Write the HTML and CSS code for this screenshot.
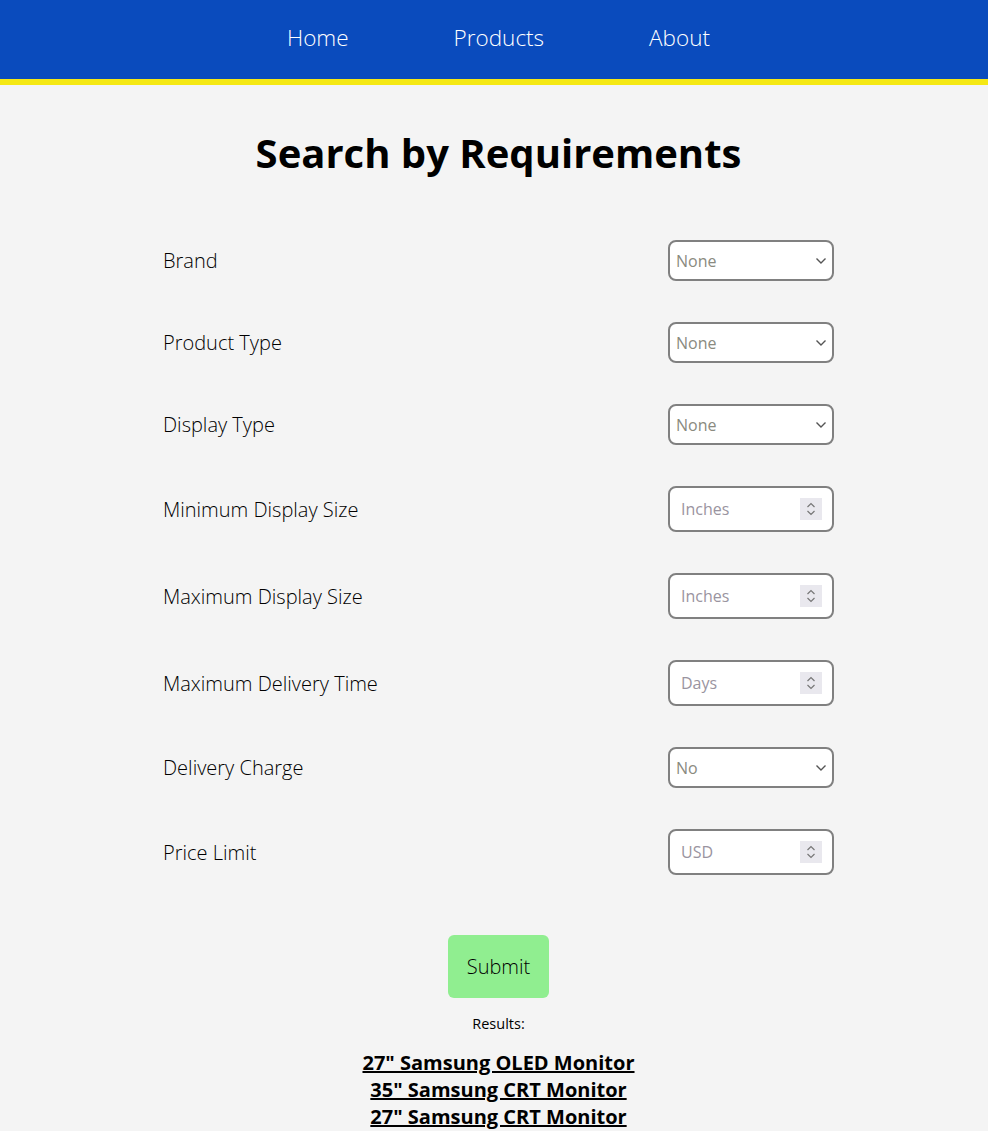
FILE: index.html
```html
<!DOCTYPE html>
<html lang="en">
<head>
<meta charset="utf-8">
<title>Search by Requirements</title>
<link rel="stylesheet" href="styles.css">
</head>
<body>
<nav class="nav">
  <a class="nav-link" href="#">Home</a>
  <a class="nav-link" href="#">Products</a>
  <a class="nav-link" href="#">About</a>
</nav>
<main class="main">
  <h1 class="title">Search by Requirements</h1>
  <form class="form">
    <div class="row">
      <label class="label" for="brand">Brand</label>
      <span class="control">
        <select class="field select" id="brand"><option>None</option></select>
        <svg class="chevron" width="12" height="8" viewBox="0 0 12 8"><path d="M1.5 1.5 L6 6 L10.5 1.5" fill="none" stroke="#555" stroke-width="1.4"/></svg>
      </span>
    </div>
    <div class="row">
      <label class="label" for="ptype">Product Type</label>
      <span class="control">
        <select class="field select" id="ptype"><option>None</option></select>
        <svg class="chevron" width="12" height="8" viewBox="0 0 12 8"><path d="M1.5 1.5 L6 6 L10.5 1.5" fill="none" stroke="#555" stroke-width="1.4"/></svg>
      </span>
    </div>
    <div class="row">
      <label class="label" for="dtype">Display Type</label>
      <span class="control">
        <select class="field select" id="dtype"><option>None</option></select>
        <svg class="chevron" width="12" height="8" viewBox="0 0 12 8"><path d="M1.5 1.5 L6 6 L10.5 1.5" fill="none" stroke="#555" stroke-width="1.4"/></svg>
      </span>
    </div>
    <div class="row">
      <label class="label" for="mins">Minimum Display Size</label>
      <span class="control">
        <input class="field number" id="mins" type="number" placeholder="Inches">
        <span class="spinner"><svg width="10" height="16" viewBox="0 0 10 16"><path d="M1.5 6 L5 2.5 L8.5 6 M1.5 10 L5 13.5 L8.5 10" fill="none" stroke="#777" stroke-width="1.2"/></svg></span>
      </span>
    </div>
    <div class="row">
      <label class="label" for="maxs">Maximum Display Size</label>
      <span class="control">
        <input class="field number" id="maxs" type="number" placeholder="Inches">
        <span class="spinner"><svg width="10" height="16" viewBox="0 0 10 16"><path d="M1.5 6 L5 2.5 L8.5 6 M1.5 10 L5 13.5 L8.5 10" fill="none" stroke="#777" stroke-width="1.2"/></svg></span>
      </span>
    </div>
    <div class="row">
      <label class="label" for="days">Maximum Delivery Time</label>
      <span class="control">
        <input class="field number" id="days" type="number" placeholder="Days">
        <span class="spinner"><svg width="10" height="16" viewBox="0 0 10 16"><path d="M1.5 6 L5 2.5 L8.5 6 M1.5 10 L5 13.5 L8.5 10" fill="none" stroke="#777" stroke-width="1.2"/></svg></span>
      </span>
    </div>
    <div class="row">
      <label class="label" for="charge">Delivery Charge</label>
      <span class="control">
        <select class="field select" id="charge"><option>No</option></select>
        <svg class="chevron" width="12" height="8" viewBox="0 0 12 8"><path d="M1.5 1.5 L6 6 L10.5 1.5" fill="none" stroke="#555" stroke-width="1.4"/></svg>
      </span>
    </div>
    <div class="row">
      <label class="label" for="price">Price Limit</label>
      <span class="control">
        <input class="field number" id="price" type="number" placeholder="USD">
        <span class="spinner"><svg width="10" height="16" viewBox="0 0 10 16"><path d="M1.5 6 L5 2.5 L8.5 6 M1.5 10 L5 13.5 L8.5 10" fill="none" stroke="#777" stroke-width="1.2"/></svg></span>
      </span>
    </div>
    <div class="actions">
      <button class="submit" type="button">Submit</button>
    </div>
  </form>
  <p class="results-label">Results:</p>
  <div class="results">
    <a class="result" href="#">27" Samsung OLED Monitor</a>
    <a class="result" href="#">35" Samsung CRT Monitor</a>
    <a class="result" href="#">27" Samsung CRT Monitor</a>
  </div>
</main>
</body>
</html>
```
FILE: styles.css
```css
* { box-sizing: border-box; }
html, body { margin: 0; padding: 0; }
body {
  background: #f4f4f4;
  font-family: "Open Sans", "Liberation Sans", sans-serif;
  color: #000;
}
.nav {
  height: 85px;
  background: #0a4bbd;
  border-bottom: 6px solid #f5e814;
  display: flex;
  justify-content: center;
  align-items: center;
  gap: 105px;
  padding: 0 0 4px 9px;
}
.nav-link {
  color: #fff;
  text-decoration: none;
  font-size: 22.5px;
  font-weight: 300;
}
.main {
  display: flex;
  flex-direction: column;
  align-items: center;
  padding-left: 9px;
}
.title {
  margin: 26px 0 0;
  font-size: 40px;
  font-weight: 700;
  line-height: 84px;
}
.form {
  width: 671px;
  margin-top: 45px;
  display: flex;
  flex-direction: column;
  gap: 41px;
}
.row {
  display: flex;
  justify-content: space-between;
  align-items: center;
}
.label {
  font-size: 20px;
  font-weight: 300;
  color: #000;
}
.control {
  position: relative;
  display: block;
  width: 166px;
}
.field {
  display: block;
  width: 166px;
  border: 2px solid #808080;
  border-radius: 8px;
  background: #fff;
  font-family: "Open Sans", "Liberation Sans", sans-serif;
  font-size: 16px;
  outline: none;
}
.select {
  height: 41px;
  padding: 0 2px 0 6px;
  color: #8a8a80;
  appearance: none;
  -webkit-appearance: none;
}
.chevron {
  position: absolute;
  right: 7px;
  top: 17px;
  pointer-events: none;
}
.number {
  height: 46px;
  padding: 0 10px 0 11px;
  appearance: textfield;
  -moz-appearance: textfield;
}
.number::-webkit-inner-spin-button,
.number::-webkit-outer-spin-button {
  -webkit-appearance: none;
  margin: 0;
}
.number::placeholder { color: #9a94a0; }
.spinner {
  position: absolute;
  right: 12px;
  top: 12px;
  width: 22px;
  height: 22px;
  background: #e9e8ee;
  display: flex;
  align-items: center;
  justify-content: center;
  pointer-events: none;
}
.actions {
  display: flex;
  justify-content: center;
  margin-top: 19px;
}
.submit {
  width: 101px;
  height: 63px;
  background: #90ee90;
  border: none;
  border-radius: 6px;
  font-family: "Open Sans", "Liberation Sans", sans-serif;
  font-size: 20px;
  font-weight: 300;
  color: #000;
}
.results-label {
  margin: 16px 0 0;
  font-size: 14.5px;
}
.results {
  display: flex;
  flex-direction: column;
  align-items: center;
  margin-top: 16px;
}
.result {
  color: #000;
  font-weight: 700;
  font-size: 20px;
  line-height: 27px;
  text-decoration: underline;
}
```
